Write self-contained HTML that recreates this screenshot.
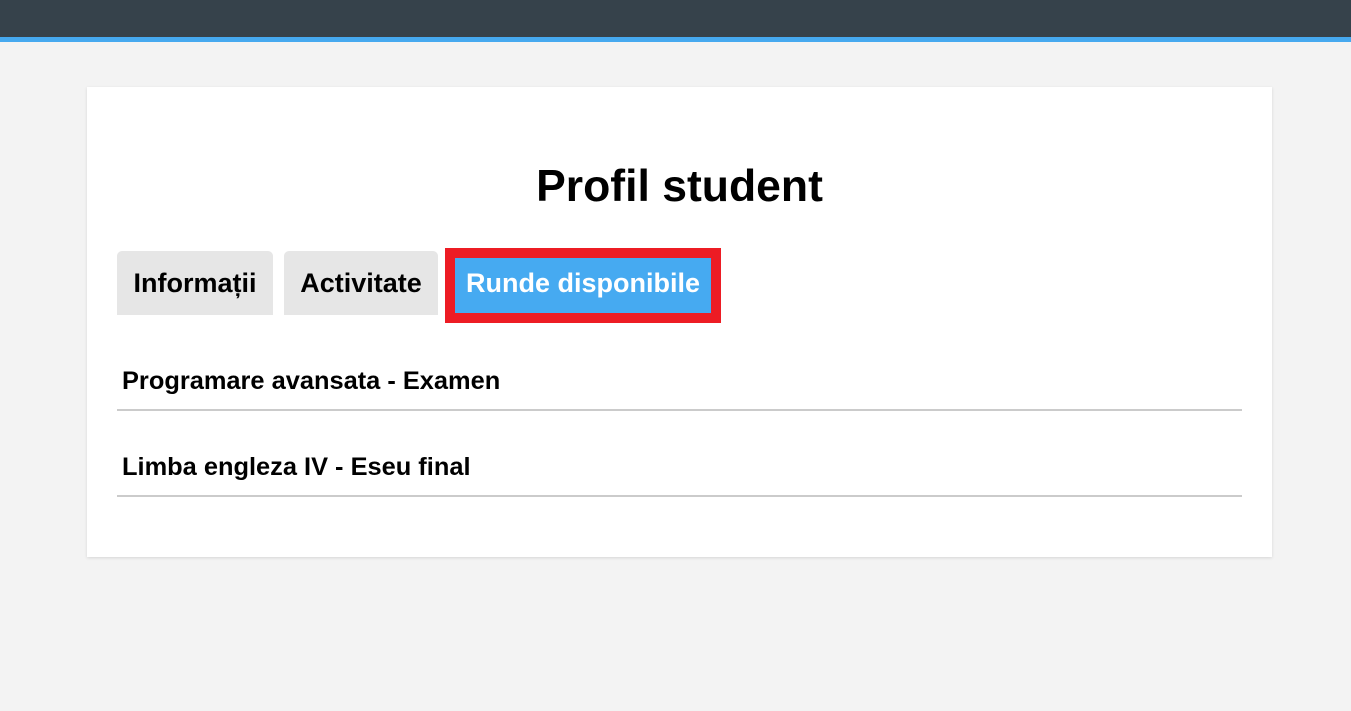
<!DOCTYPE html>
<html><head><meta charset="utf-8"><style>
*{margin:0;padding:0;box-sizing:border-box}
body{width:1351px;height:711px;background:#f3f3f3;font-family:"Liberation Sans",Arial,sans-serif;position:relative;overflow:hidden}
.hdr{position:absolute;left:0;top:0;width:1351px;height:37px;background:#36424b}
.bl{position:absolute;left:0;top:37px;width:1351px;height:5px;background:#46a9ef}
.card{position:absolute;left:87px;top:87px;width:1185px;height:470px;background:#fff;box-shadow:0 1px 3px rgba(0,0,0,0.12)}
h1{position:absolute;left:4px;width:1351px;top:162px;text-align:center;font-size:44.5px;font-weight:bold;line-height:50px;color:#000}
.tab{position:absolute;top:251px;height:64px;background:#e6e6e6;border-radius:5px 5px 0 0;font-size:27px;font-weight:bold;line-height:64px;text-align:center;color:#000;white-space:nowrap}
.act{position:absolute;left:445px;top:248px;width:276px;height:75px;border:10px solid #ed1c24;background:#46aaf1;color:#fff;font-size:27px;font-weight:bold;line-height:51px;text-align:center;white-space:nowrap}
.row{position:absolute;left:122px;font-size:25.4px;font-weight:bold;color:#000;line-height:28px}
.ln{position:absolute;left:117px;width:1125px;height:2px;background:#cbcbcb}
</style></head><body>
<div class="hdr"></div><div class="bl"></div>
<div class="card"></div>
<h1>Profil student</h1>
<div class="tab" style="left:117px;width:156px">Informații</div>
<div class="tab" style="left:284px;width:154px">Activitate</div>
<div class="act">Runde disponibile</div>
<div class="row" style="top:367px">Programare avansata - Examen</div>
<div class="ln" style="top:409px"></div>
<div class="row" style="top:453px">Limba engleza IV - Eseu final</div>
<div class="ln" style="top:495px"></div>
</body></html>
